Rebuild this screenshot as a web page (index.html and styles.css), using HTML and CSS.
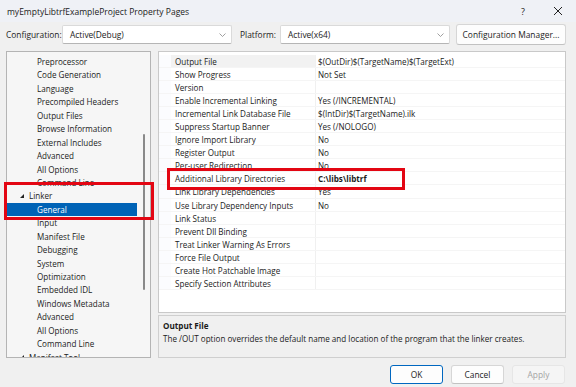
FILE: index.html
```html
<!DOCTYPE html>
<html lang="en">
<head>
    <meta charset="UTF-8">
    <title>myEmptyLibtrfExampleProject Property Pages</title>
    <link rel="stylesheet" href="styles.css">
</head>
<body>
    <div class="dialog">
        <div class="titlebar">
            <span class="title">myEmptyLibtrfExampleProject Property Pages</span>
            <span class="help">?</span>
            <span class="close">
                <svg width="10" height="10" viewBox="0 0 10 10"><path d="M1 1L9 9M9 1L1 9" stroke="#222" stroke-width="1"/></svg>
            </span>
        </div>

        <div class="config-row">
            <span class="label">Configuration:</span>
            <div class="select config-select">
                <span>Active(Debug)</span>
                <svg class="chevron" width="7" height="4" viewBox="0 0 7 4"><path d="M0.5 0.5L3.5 3.5L6.5 0.5" fill="none" stroke="#888" stroke-width="0.8"/></svg>
            </div>
            <span class="label platform-label">Platform:</span>
            <div class="select platform-select">
                <span>Active(x64)</span>
                <svg class="chevron" width="7" height="4" viewBox="0 0 7 4"><path d="M0.5 0.5L3.5 3.5L6.5 0.5" fill="none" stroke="#888" stroke-width="0.8"/></svg>
            </div>
            <button class="btn manager-btn">Configuration Manager...</button>
        </div>

        <div class="main">
            <div class="tree">
                <ul class="tree-list">
                    <li class="child">Preprocessor</li>
                    <li class="child">Code Generation</li>
                    <li class="child">Language</li>
                    <li class="child">Precompiled Headers</li>
                    <li class="child">Output Files</li>
                    <li class="child">Browse Information</li>
                    <li class="child">External Includes</li>
                    <li class="child">Advanced</li>
                    <li class="child">All Options</li>
                    <li class="child">Command Line</li>
                    <li class="parent"><span class="arrow"></span>Linker</li>
                    <li class="child selected">General</li>
                    <li class="child">Input</li>
                    <li class="child">Manifest File</li>
                    <li class="child">Debugging</li>
                    <li class="child">System</li>
                    <li class="child">Optimization</li>
                    <li class="child">Embedded IDL</li>
                    <li class="child">Windows Metadata</li>
                    <li class="child">Advanced</li>
                    <li class="child">All Options</li>
                    <li class="child">Command Line</li>
                    <li class="parent"><span class="arrow"></span>Manifest Tool</li>
                </ul>
                <div class="scroll-track">
                    <div class="scroll-thumb"></div>
                </div>
            </div>

            <div class="right">
                <div class="grid">
                    <div class="prop selected"><span class="gutter"></span><span class="name">Output File</span><span class="value">$(OutDir)$(TargetName)$(TargetExt)</span></div>
                    <div class="prop"><span class="gutter"></span><span class="name">Show Progress</span><span class="value">Not Set</span></div>
                    <div class="prop"><span class="gutter"></span><span class="name">Version</span><span class="value"></span></div>
                    <div class="prop"><span class="gutter"></span><span class="name">Enable Incremental Linking</span><span class="value">Yes (/INCREMENTAL)</span></div>
                    <div class="prop"><span class="gutter"></span><span class="name">Incremental Link Database File</span><span class="value">$(IntDir)$(TargetName).ilk</span></div>
                    <div class="prop"><span class="gutter"></span><span class="name">Suppress Startup Banner</span><span class="value">Yes (/NOLOGO)</span></div>
                    <div class="prop"><span class="gutter"></span><span class="name">Ignore Import Library</span><span class="value">No</span></div>
                    <div class="prop"><span class="gutter"></span><span class="name">Register Output</span><span class="value">No</span></div>
                    <div class="prop"><span class="gutter"></span><span class="name">Per-user Redirection</span><span class="value">No</span></div>
                    <div class="prop"><span class="gutter"></span><span class="name">Additional Library Directories</span><span class="value bold">C:\libs\libtrf</span></div>
                    <div class="prop"><span class="gutter"></span><span class="name">Link Library Dependencies</span><span class="value">Yes</span></div>
                    <div class="prop"><span class="gutter"></span><span class="name">Use Library Dependency Inputs</span><span class="value">No</span></div>
                    <div class="prop"><span class="gutter"></span><span class="name">Link Status</span><span class="value"></span></div>
                    <div class="prop"><span class="gutter"></span><span class="name">Prevent Dll Binding</span><span class="value"></span></div>
                    <div class="prop"><span class="gutter"></span><span class="name">Treat Linker Warning As Errors</span><span class="value"></span></div>
                    <div class="prop"><span class="gutter"></span><span class="name">Force File Output</span><span class="value"></span></div>
                    <div class="prop"><span class="gutter"></span><span class="name">Create Hot Patchable Image</span><span class="value"></span></div>
                    <div class="prop"><span class="gutter"></span><span class="name">Specify Section Attributes</span><span class="value"></span></div>
                </div>
                <div class="description">
                    <div class="desc-title">Output File</div>
                    <div class="desc-text">The /OUT option overrides the default name and location of the program that the linker creates.</div>
                </div>
            </div>
        </div>

        <div class="footer">
            <button class="btn ok-btn">OK</button>
            <button class="btn">Cancel</button>
            <button class="btn disabled">Apply</button>
        </div>

        <!-- highlight boxes drawn over the dialog -->
        <div class="mark mark-tree"></div>
        <div class="mark mark-prop"></div>
    </div>
</body>
</html>
```

FILE: styles.css
```css
* {
    margin: 0;
    padding: 0;
    box-sizing: border-box;
}

body {
    font-family: "Open Sans", "Noto Sans", sans-serif;
    font-size: 8.1px;
    color: #1b1b1b;
    background-color: #f0f0f0;
    width: 576px;
    height: 387px;
    overflow: hidden;
}

.dialog {
    position: relative;
    width: 576px;
    height: 387px;
}

.titlebar {
    height: 22px;
    display: flex;
    align-items: center;
    padding: 0 7px;
    background-color: #eff1f6;
}

.title {
    flex: 1;
    font-size: 8.5px;
}

.help {
    width: 12px;
    text-align: center;
    margin-right: 24px;
    font-size: 9px;
}

.close {
    display: flex;
    margin-right: 6px;
}

.config-row {
    height: 25px;
    display: flex;
    align-items: center;
    padding-left: 6px;
    font-size: 8.4px;
}

.label {
    width: 56px;
}

.platform-label {
    width: 40px;
    margin-left: 8px;
}

.select {
    display: flex;
    align-items: center;
    justify-content: space-between;
    height: 19px;
    padding: 0 5px 0 7px;
    background: #fff;
    border: 1px solid #dadada;
    border-bottom-color: #b5b5b5;
    border-radius: 2px;
}

.config-select {
    width: 170px;
}

.platform-select {
    width: 170px;
}

.btn {
    font-family: inherit;
    font-size: 8.4px;
    color: #1b1b1b;
    background: #fdfdfd;
    border: 1px solid #d6d6d6;
    border-bottom-color: #c2c2c2;
    border-radius: 3px;
    height: 20px;
}

.manager-btn {
    width: 110px;
    height: 21px;
    margin-left: 6px;
}

.main {
    display: flex;
    gap: 7px;
    padding: 0 10px 0 6px;
    margin-top: 4px;
    height: 307px;
}

.tree {
    width: 145px;
    display: flex;
    background: #f6f6f6;
    border: 1px solid #b4b4b4;
    overflow: hidden;
}

.tree-list {
    list-style: none;
    flex: 1;
    padding-top: 3px;
}

.tree-list li {
    height: 13.45px;
    line-height: 13.45px;
    white-space: nowrap;
}

.tree-list .child {
    padding-left: 30px;
}

.tree-list .parent {
    padding-left: 13px;
    display: flex;
    align-items: center;
}

.tree-list .selected {
    background-color: #0063b6;
    color: #fff;
}

.arrow {
    width: 0;
    height: 0;
    border-left: 4px solid transparent;
    border-bottom: 4px solid #222;
    margin-right: 5px;
}

.scroll-track {
    width: 13px;
    display: flex;
    justify-content: center;
}

.scroll-thumb {
    width: 2px;
    height: 156px;
    margin-top: 82px;
    background: #8a8a8a;
    border-radius: 1px;
}

.right {
    flex: 1;
    display: flex;
    flex-direction: column;
    gap: 2px;
}

.grid {
    height: 262px;
    background: #fff;
    border: 1px solid #c9c9c9;
    padding-top: 3px;
}

.prop {
    display: flex;
    height: 13.05px;
    line-height: 13.05px;
    border-bottom: 1px solid #f5f5f5;
}

.gutter {
    width: 12px;
    background: #fbfcfe;
}

.name {
    width: 145px;
    padding-left: 4px;
    border-right: 1px solid #f0f0f0;
    white-space: nowrap;
}

.prop.selected .name {
    background: #f2f2f2;
}

.value {
    flex: 1;
    padding-left: 2px;
    white-space: nowrap;
}

.value.bold {
    font-weight: 700;
}

.description {
    height: 43px;
    background: #f0f0f0;
    border: 1px solid #cfcfcf;
    padding: 3px 4px;
}

.desc-title {
    font-weight: 700;
    line-height: 13px;
}

.desc-text {
    line-height: 14px;
}

.footer {
    display: flex;
    justify-content: flex-end;
    gap: 8px;
    padding: 7px 11px 0 0;
}

.footer .btn {
    width: 53px;
    height: 19px;
}

.ok-btn {
    border-color: #0067c0;
}

.btn.disabled {
    color: #a3a3a3;
    background: #f5f5f5;
    border-color: #e6e6e6;
}

.mark {
    position: absolute;
    border: 3px solid #e30613;
}

.mark-tree {
    left: 4px;
    top: 182px;
    width: 150px;
    height: 38px;
}

.mark-prop {
    left: 167px;
    top: 168px;
    width: 238px;
    height: 22px;
}
```
